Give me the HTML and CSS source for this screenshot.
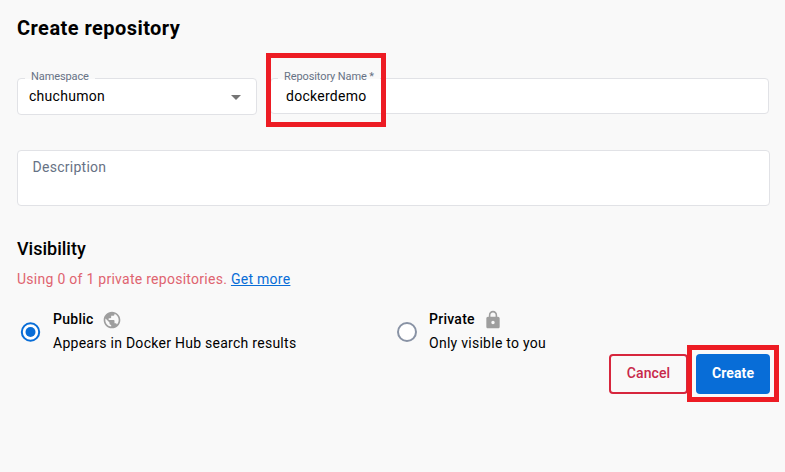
FILE: index.html
```html
<!DOCTYPE html>
<html lang="en">
<head>
<meta charset="utf-8">
<title>Create repository</title>
<link rel="stylesheet" href="styles.css">
</head>
<body>
<main class="page">
  <h1 class="title">Create repository</h1>
  <div class="row">
    <div class="field namespace">
      <span class="label">Namespace</span>
      <span class="value">chuchumon</span>
      <svg class="caret" width="10" height="5" viewBox="0 0 10 5"><path d="M0 0h10L5 5z" fill="#757575"/></svg>
    </div>
    <div class="field reponame">
      <span class="label">Repository Name *</span>
      <span class="value">dockerdemo</span>
      <span class="highlight highlight-name"></span>
    </div>
  </div>
  <div class="description">Description</div>
  <h2 class="subtitle">Visibility</h2>
  <p class="usage">Using 0 of 1 private repositories. <a class="link" href="#">Get more</a></p>
  <div class="options">
    <div class="option">
      <svg class="radio" width="20" height="20" viewBox="0 0 20 20"><circle cx="9.5" cy="10" r="8.7" fill="#fff" stroke="#086dd7" stroke-width="2"/><circle cx="9.5" cy="10" r="5" fill="#086dd7"/></svg>
      <div class="option-text">
        <div class="option-name"><span>Public</span><svg class="icon" width="20" height="20" viewBox="0 0 24 24"><path fill="#9e9e9e" d="M12 2C6.48 2 2 6.48 2 12s4.48 10 10 10 10-4.48 10-10S17.52 2 12 2zm-1 17.93c-3.95-.49-7-3.85-7-7.93 0-.62.08-1.21.21-1.79L9 15v1c0 1.100.9 2 2 2v1.930zm6.900-2.540c-.26-.81-1-1.390-1.900-1.390h-1v-3c0-.55-.45-1-1-1H8v-2h2c.55 0 1-.45 1-1V7h2c1.100 0 2-.9 2-2v-.41c2.930 1.190 5 4.060 5 7.410 0 2.080-.8 3.970-2.100 5.390z"/></svg></div>
        <div class="option-info">Appears in Docker Hub search results</div>
      </div>
    </div>
    <div class="option">
      <svg class="radio" width="20" height="20" viewBox="0 0 20 20"><circle cx="10" cy="10" r="9" fill="#fff" stroke="#8993a5" stroke-width="2"/></svg>
      <div class="option-text">
        <div class="option-name"><span>Private</span><svg class="icon" width="20" height="20" viewBox="0 0 24 24"><path fill="#9e9e9e" d="M18 8h-1V6c0-2.760-2.240-5-5-5S7 3.240 7 6v2H6c-1.100 0-2 .9-2 2v10c0 1.100.9 2 2 2h12c1.100 0 2-.9 2-2V10c0-1.100-.9-2-2-2zm-6 9c-1.100 0-2-.9-2-2s.9-2 2-2 2 .9 2 2-.9 2-2 2zm3.100-9H8.900V6c0-1.710 1.390-3.100 3.100-3.100s3.100 1.390 3.100 3.100v2z"/></svg></div>
        <div class="option-info">Only visible to you</div>
      </div>
    </div>
  </div>
  <div class="actions">
    <button class="btn cancel">Cancel</button>
    <button class="btn create">Create<span class="highlight highlight-create"></span></button>
  </div>
</main>
</body>
</html>
```

FILE: styles.css
```css
* { box-sizing: border-box; }
body {
  margin: 0;
  height: 472px;
  overflow: hidden;
  background: #f9f9f9;
  color: #000;
  font: 14px/20px Roboto, sans-serif;
  letter-spacing: 0.27px;
}
.page { padding: 14px 15px 0 17px; }
.title { margin: 0; font-size: 20px; line-height: 28px; font-weight: 700; letter-spacing: 0.45px; }
.row { display: flex; align-items: flex-start; margin-top: 36px; gap: 13px; }
.field {
  position: relative;
  display: flex;
  align-items: center;
  justify-content: space-between;
  background: #fff;
  border: 1px solid #e1e2e6;
  border-radius: 4px;
}
.namespace { width: 240px; height: 37px; padding: 0 15px 1px 11px; }
.reponame { width: 499px; height: 36px; padding: 0 15px; }
.label {
  position: absolute;
  top: -9px;
  left: 7px;
  padding: 0 6px;
  height: 14px;
  background: linear-gradient(#f9f9f9 9px, #fff 9px);
  color: #677285;
  font-size: 11px;
  line-height: 14px;
  letter-spacing: -0.1px;
  white-space: nowrap;
}
.caret { margin-top: 3px; }
.highlight { position: absolute; border: 5px solid #ed1c24; }
.highlight-name { left: -5px; top: -26px; width: 120px; height: 74px; }
.highlight-create { left: -9px; top: -9px; width: 92px; height: 57px; }
.description {
  width: 753px;
  height: 56px;
  margin-top: 35px;
  padding: 6px 14.5px;
  background: #fff;
  border: 1px solid #e1e2e6;
  border-radius: 4px;
  color: #677285;
}
.subtitle { margin: 31px 0 0; font-size: 18px; line-height: 24px; font-weight: 500; letter-spacing: 0; }
.usage { margin: 8px 0 0; color: #df6470; }
.link { color: #086dd7; text-decoration: underline; }
.options { display: grid; grid-template-columns: 376px 1fr; margin-top: 18px; padding-left: 4px; }
.option { display: flex; align-items: center; gap: 12px; }
.radio { overflow: visible; margin-top: 2px; }
.option-name { display: flex; align-items: center; height: 24px; gap: 8px; font-weight: 500; }
.option-info { height: 24px; line-height: 24px; }
.icon { margin-top: 2px; }
.actions { display: flex; justify-content: flex-end; gap: 8px; margin-top: -1px; }
.btn {
  position: relative;
  height: 40px;
  padding: 0 0 2px;
  border: 0;
  border-radius: 4px;
  font: 500 14px/20px Roboto, sans-serif;
  letter-spacing: 0.1px;
}
.cancel { width: 79px; background: #f9f9f9; border: 2px solid #d7263d; color: #c8284a; }
.create { width: 74px; background: #086dd7; color: #fff; font-weight: 700; }
```
